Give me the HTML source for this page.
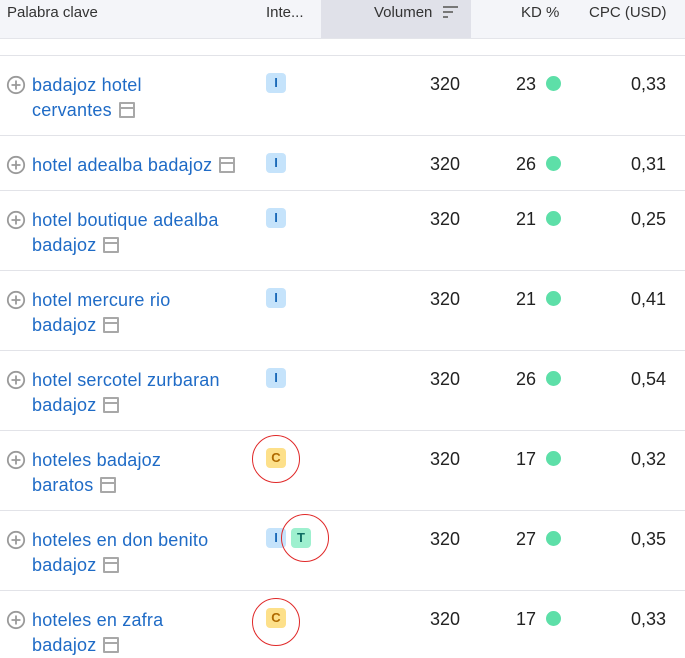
<!DOCTYPE html>
<html><head><meta charset="utf-8"><style>
body{margin:0;width:685px;height:658px;overflow:hidden;background:#fff;font-family:"Liberation Sans",sans-serif;position:relative}
.hdr{position:absolute;left:0;top:0;width:685px;height:38px;background:#f4f5f9;border-bottom:1px solid #e4e5ea}
.hv{position:absolute;left:321px;top:0;width:150px;height:38px;background:#e0e1e9}
.h{position:absolute;top:4px;font-size:15px;color:#333}
.line{position:absolute;left:0;width:685px;height:1px;background:#e2e3e8}
.kw{position:absolute;left:32px;font-size:18px;letter-spacing:0.2px;color:#1f6bc6;line-height:25px;margin-top:2px}
.plus{position:absolute;left:6px;margin-top:1px}
.pg{display:inline-block;width:16px;height:16px;border:2px solid #a8a8a8;border-radius:1px;box-sizing:border-box;vertical-align:-2px;margin-left:7px;position:relative}
.pg:after{content:"";position:absolute;left:0;right:0;top:3px;height:2px;background:#a8a8a8}
.b{position:absolute;width:20px;height:20px;border-radius:4px;font-size:13px;font-weight:bold;text-align:center;line-height:20px}
.I{background:#c5e3fb;color:#1c6ab8}.C{background:#fde08a;color:#b06a00}.T{background:#9ef0cf;color:#0f6d63}
.n{position:absolute;font-size:18px;color:#222;text-align:right;margin-top:1px}
.dot{position:absolute;left:546px;width:15px;height:15px;border-radius:50%;background:#5ddfa8}
.circ{position:absolute;width:48px;height:48px;border:1.3px solid #e02828;border-radius:50%;box-sizing:border-box}
</style></head><body>
<div class="hdr"></div><div class="hv"></div>
<div class="h" style="left:7px">Palabra clave</div>
<div class="h" style="left:266px">Inte...</div>
<div class="h" style="left:374px">Volumen</div>
<svg style="position:absolute;left:443px;top:5px" width="16" height="14"><rect x="0" y="1" width="15" height="2" fill="#777"/><rect x="0" y="6" width="10" height="2" fill="#777"/><rect x="0" y="11" width="5" height="2" fill="#777"/></svg>
<div class="h" style="left:521px">KD %</div>
<div class="h" style="left:589px">CPC (USD)</div>
<div class="line" style="top:55px"></div>
<div class="line" style="top:135px"></div>
<div class="line" style="top:190px"></div>
<div class="line" style="top:270px"></div>
<div class="line" style="top:350px"></div>
<div class="line" style="top:430px"></div>
<div class="line" style="top:510px"></div>
<div class="line" style="top:590px"></div>

<svg width="0" height="0" style="position:absolute"><defs><g id="pl"><circle cx="10" cy="10" r="8.2" fill="none" stroke="#9a9a9a" stroke-width="1.8"/><path d="M10 5.5v9M5.5 10h9" stroke="#9a9a9a" stroke-width="1.8"/></g></defs></svg>

<svg class="plus" style="top:74px" width="20" height="20"><use href="#pl"/></svg><div class="kw" style="top:71px">badajoz hotel<br>cervantes<span class="pg"></span></div>
<div class="b I" style="left:266px;top:73px">I</div><div class="n" style="left:400px;width:60px;top:73px">320</div><div class="n" style="left:490px;width:46px;top:73px">23</div><div class="dot" style="top:76px"></div><div class="n" style="left:600px;width:66px;top:73px">0,33</div>

<svg class="plus" style="top:154px" width="20" height="20"><use href="#pl"/></svg><div class="kw" style="top:151px">hotel adealba badajoz<span class="pg"></span></div>
<div class="b I" style="left:266px;top:153px">I</div><div class="n" style="left:400px;width:60px;top:153px">320</div><div class="n" style="left:490px;width:46px;top:153px">26</div><div class="dot" style="top:156px"></div><div class="n" style="left:600px;width:66px;top:153px">0,31</div>

<svg class="plus" style="top:209px" width="20" height="20"><use href="#pl"/></svg><div class="kw" style="top:206px">hotel boutique adealba<br>badajoz<span class="pg"></span></div>
<div class="b I" style="left:266px;top:208px">I</div><div class="n" style="left:400px;width:60px;top:208px">320</div><div class="n" style="left:490px;width:46px;top:208px">21</div><div class="dot" style="top:211px"></div><div class="n" style="left:600px;width:66px;top:208px">0,25</div>

<svg class="plus" style="top:289px" width="20" height="20"><use href="#pl"/></svg><div class="kw" style="top:286px">hotel mercure rio<br>badajoz<span class="pg"></span></div>
<div class="b I" style="left:266px;top:288px">I</div><div class="n" style="left:400px;width:60px;top:288px">320</div><div class="n" style="left:490px;width:46px;top:288px">21</div><div class="dot" style="top:291px"></div><div class="n" style="left:600px;width:66px;top:288px">0,41</div>

<svg class="plus" style="top:369px" width="20" height="20"><use href="#pl"/></svg><div class="kw" style="top:366px">hotel sercotel zurbaran<br>badajoz<span class="pg"></span></div>
<div class="b I" style="left:266px;top:368px">I</div><div class="n" style="left:400px;width:60px;top:368px">320</div><div class="n" style="left:490px;width:46px;top:368px">26</div><div class="dot" style="top:371px"></div><div class="n" style="left:600px;width:66px;top:368px">0,54</div>

<svg class="plus" style="top:449px" width="20" height="20"><use href="#pl"/></svg><div class="kw" style="top:446px">hoteles badajoz<br>baratos<span class="pg"></span></div>
<div class="b C" style="left:266px;top:448px">C</div><div class="circ" style="left:252px;top:435px"></div><div class="n" style="left:400px;width:60px;top:448px">320</div><div class="n" style="left:490px;width:46px;top:448px">17</div><div class="dot" style="top:451px"></div><div class="n" style="left:600px;width:66px;top:448px">0,32</div>

<svg class="plus" style="top:529px" width="20" height="20"><use href="#pl"/></svg><div class="kw" style="top:526px">hoteles en don benito<br>badajoz<span class="pg"></span></div>
<div class="b I" style="left:266px;top:528px">I</div><div class="b T" style="left:291px;top:528px">T</div><div class="circ" style="left:281px;top:514px"></div><div class="n" style="left:400px;width:60px;top:528px">320</div><div class="n" style="left:490px;width:46px;top:528px">27</div><div class="dot" style="top:531px"></div><div class="n" style="left:600px;width:66px;top:528px">0,35</div>

<svg class="plus" style="top:609px" width="20" height="20"><use href="#pl"/></svg><div class="kw" style="top:606px">hoteles en zafra<br>badajoz<span class="pg"></span></div>
<div class="b C" style="left:266px;top:608px">C</div><div class="circ" style="left:252px;top:598px"></div><div class="n" style="left:400px;width:60px;top:608px">320</div><div class="n" style="left:490px;width:46px;top:608px">17</div><div class="dot" style="top:611px"></div><div class="n" style="left:600px;width:66px;top:608px">0,33</div>
</body></html>
